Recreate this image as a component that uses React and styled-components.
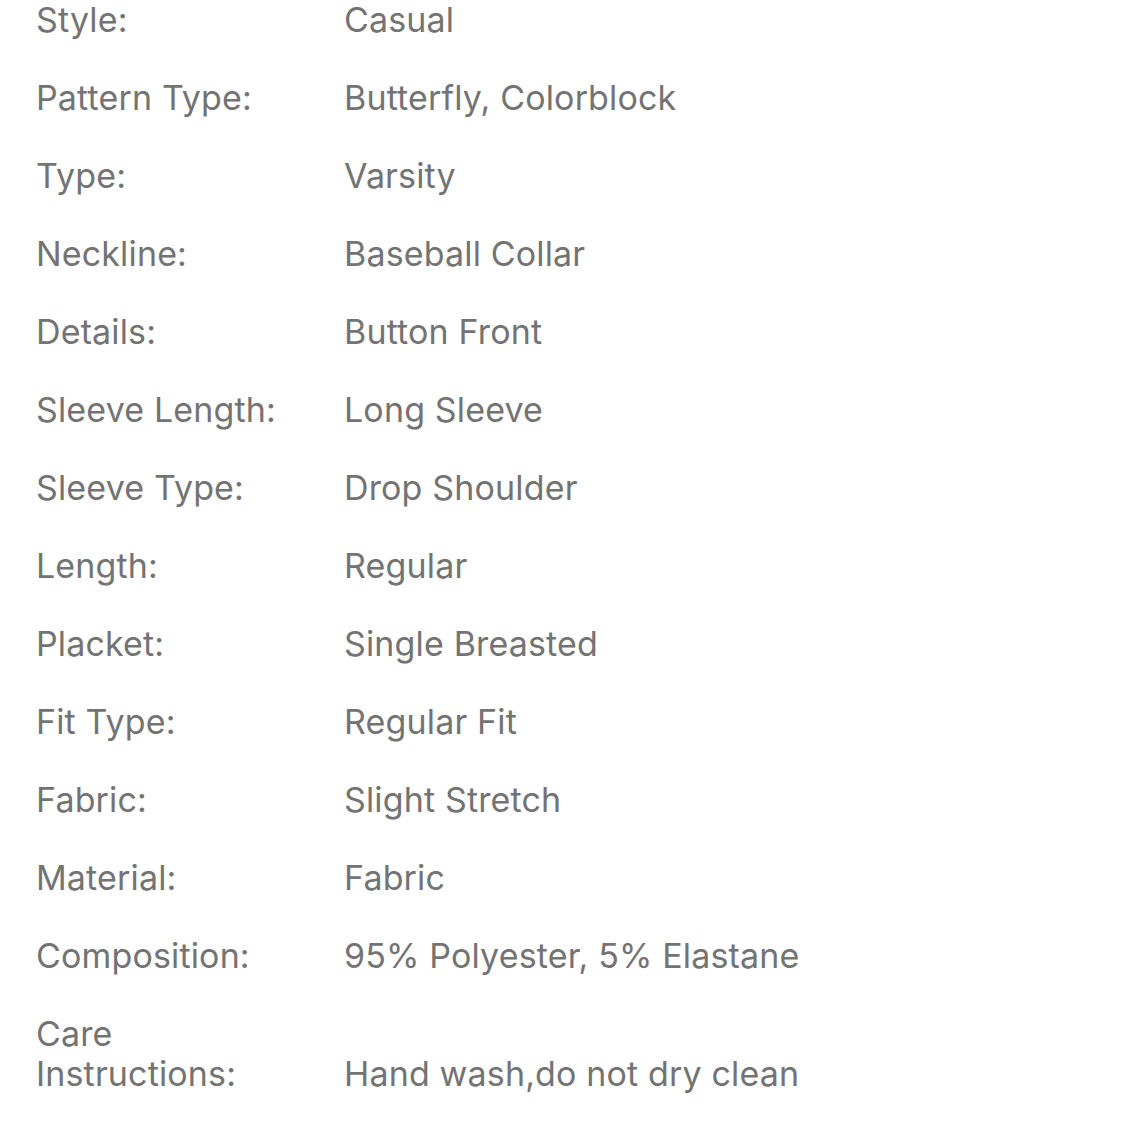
import styled, { createGlobalStyle } from "styled-components";

const GlobalStyle = createGlobalStyle`
  body {
    margin: 0;
    background: #ffffff;
  }
`;

const specs = [
  ["Style:", "Casual"],
  ["Pattern Type:", "Butterfly, Colorblock"],
  ["Type:", "Varsity"],
  ["Neckline:", "Baseball Collar"],
  ["Details:", "Button Front"],
  ["Sleeve Length:", "Long Sleeve"],
  ["Sleeve Type:", "Drop Shoulder"],
  ["Length:", "Regular"],
  ["Placket:", "Single Breasted"],
  ["Fit Type:", "Regular Fit"],
  ["Fabric:", "Slight Stretch"],
  ["Material:", "Fabric"],
  ["Composition:", "95% Polyester, 5% Elastane"],
  ["Care\nInstructions:", "Hand wash,do not dry clean"],
];

const App = () => {
  return (
    <>
      <GlobalStyle />
      <SpecList>
        {specs.map(([label, value]) => (
          <SpecRow key={label}>
            <SpecLabel>{label}</SpecLabel>
            <SpecValue>{value}</SpecValue>
          </SpecRow>
        ))}
      </SpecList>
    </>
  );
};

const SpecList = styled.div`
  display: flex;
  flex-direction: column;
  gap: 38px;
  padding: 0 36px;
  font-family: Inter, "Liberation Sans", sans-serif;
  font-size: 34px;
  letter-spacing: 0.15px;
  line-height: 40px;
  color: #737373;
`;

const SpecRow = styled.div`
  display: grid;
  grid-template-columns: 308px 1fr;
  align-items: end;
`;

const SpecLabel = styled.div`
  white-space: pre-line;
`;

const SpecValue = styled.div``;

export default App;
